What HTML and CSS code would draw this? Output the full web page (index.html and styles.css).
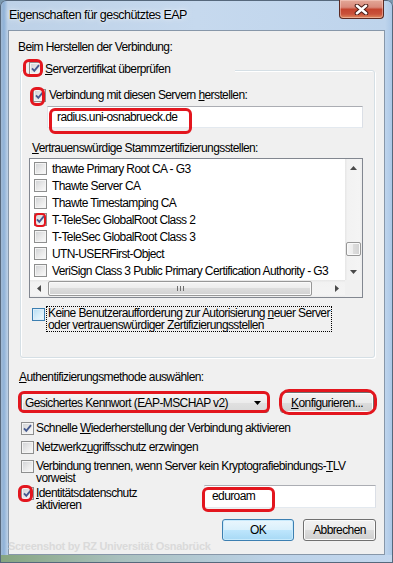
FILE: index.html
```html
<!DOCTYPE html>
<html lang="de">
<head>
    <meta charset="UTF-8">
    <meta name="viewport" content="width=device-width, initial-scale=1.0">
    <title>Eigenschaften für geschütztes EAP</title>
    <link rel="stylesheet" href="styles.css">
</head>
<body>
    <div class="window">
        <div class="titlebar">
            <span class="title">Eigenschaften für geschütztes EAP</span>
            <div class="close-btn">
                <svg width="15" height="11" viewBox="0 0 15 11">
                    <path d="M3 1.8L12 9.2M12 1.8L3 9.2" stroke="#4a1d16" stroke-width="4.6" stroke-linecap="round"/>
                    <path d="M3 1.8L12 9.2M12 1.8L3 9.2" stroke="#fff" stroke-width="2.6" stroke-linecap="round"/>
                </svg>
            </div>
        </div>

        <div class="client">
            <div class="intro">Beim Herstellen der Verbindung:</div>

            <div class="group">
                <div class="group-caption">
                    <span class="box hl hl-server"><svg class="tick" width="11" height="11" viewBox="0 0 11 11"><path d="M2 5.3L4.3 7.8L9 2.2"/></svg></span>
                    <span><u>S</u>erverzertifikat überprüfen</span>
                </div>

                <div class="check servers-check">
                    <span class="box hl hl-servers"><svg class="tick" width="11" height="11" viewBox="0 0 11 11"><path d="M2 5.3L4.3 7.8L9 2.2"/></svg></span>
                    <span>Verbindung mit diesen Servern <u>h</u>erstellen:</span>
                </div>

                <div class="textbox servers-field hl hl-radius">radius.uni-osnabrueck.de</div>

                <div class="list-label"><u>V</u>ertrauenswürdige Stammzertifizierungsstellen:</div>

                <div class="listbox">
                    <div class="items">
                        <div class="item"><span class="box"></span>thawte Primary Root CA - G3</div>
                        <div class="item"><span class="box"></span>Thawte Server CA</div>
                        <div class="item"><span class="box"></span>Thawte Timestamping CA</div>
                        <div class="item"><span class="box hl hl-telesec"><svg class="tick" width="11" height="11" viewBox="0 0 11 11"><path d="M2 5.3L4.3 7.8L9 2.2"/></svg></span>T-TeleSec GlobalRoot Class 2</div>
                        <div class="item"><span class="box"></span>T-TeleSec GlobalRoot Class 3</div>
                        <div class="item"><span class="box"></span>UTN-USERFirst-Object</div>
                        <div class="item"><span class="box"></span>VeriSign Class 3 Public Primary Certification Authority - G3</div>
                    </div>
                    <div class="vscroll">
                        <div class="arrow-btn"><svg width="7" height="4" viewBox="0 0 7 4"><path d="M3.5 0L7 4H0Z"/></svg></div>
                        <div class="track">
                            <div class="vthumb"></div>
                        </div>
                        <div class="arrow-btn"><svg width="7" height="4" viewBox="0 0 7 4"><path d="M0 0H7L3.5 4Z"/></svg></div>
                    </div>
                    <div class="hscroll">
                        <div class="arrow-btn"><svg width="4" height="7" viewBox="0 0 4 7"><path d="M0 3.5L4 0V7Z"/></svg></div>
                        <div class="htrack">
                            <div class="hthumb"><span class="grip"></span></div>
                        </div>
                        <div class="arrow-btn"><svg width="4" height="7" viewBox="0 0 4 7"><path d="M0 0L4 3.5L0 7Z"/></svg></div>
                    </div>
                    <div class="corner"></div>
                </div>

                <div class="prompt-row">
                    <span class="box hot"></span>
                    <span class="focus">Keine Benutzeraufforderung zur Autorisierung <u>n</u>euer Server<br>oder vertrauenswürdiger Zertifizierungsstellen</span>
                </div>
            </div>

            <div class="auth-label"><u>A</u>uthentifizierungsmethode auswählen:</div>

            <div class="method-row">
                <div class="combo hl hl-combo">
                    <span>Gesichertes Kennwort (EAP-MSCHAP v2)</span>
                    <svg width="7" height="4" viewBox="0 0 7 4"><path d="M0 0H7L3.5 4Z"/></svg>
                </div>
                <div class="button config-btn hl hl-config"><u>K</u>onfigurieren...</div>
            </div>

            <div class="check opt opt-fast">
                <span class="box"><svg class="tick" width="11" height="11" viewBox="0 0 11 11"><path d="M2 5.3L4.3 7.8L9 2.2"/></svg></span>
                <span>Schnelle <u>W</u>iederherstellung der Verbindung aktivieren</span>
            </div>
            <div class="check opt opt-nap">
                <span class="box"></span>
                <span>Netzwerkz<u>u</u>griffsschutz erzwingen</span>
            </div>
            <div class="check opt opt-tlv multi">
                <span class="box"></span>
                <span>Verbindung trennen, wenn Server kein Kryptografiebindungs-<u>T</u>LV<br>vorweist</span>
            </div>
            <div class="identity-row">
                <div class="check opt multi">
                    <span class="box hl hl-identity"><svg class="tick" width="11" height="11" viewBox="0 0 11 11"><path d="M2 5.3L4.3 7.8L9 2.2"/></svg></span>
                    <span><u>I</u>dentitätsdatenschutz<br>aktivieren</span>
                </div>
                <div class="textbox identity-field hl hl-eduroam">eduroam</div>
            </div>

            <div class="dialog-buttons">
                <div class="button default-btn">OK</div>
                <div class="button cancel-btn">Abbrechen</div>
            </div>

            <div class="watermark">Screenshot by RZ Universität Osnabrück</div>
        </div>
    </div>
</body>
</html>
```

FILE: styles.css
```css
* {
    box-sizing: border-box;
}

body {
    margin: 0;
    background-color: #7a98ae;
    font-family: "Liberation Sans", Arial, sans-serif;
    font-size: 12px;
    letter-spacing: -0.6px;
    color: #000;
}

u {
    text-decoration: underline;
    text-underline-offset: 1px;
}

/* Fensterrahmen */
.window {
    width: 393px;
    height: 563px;
    display: flex;
    flex-direction: column;
    padding: 0 8px 8px 8px;
    border-radius: 6px 6px 0 0;
    background:
        linear-gradient(90deg, #86a57f 0%, #a9c0bd 30%, #bcd2e8 70%, #c3d7ee 100%) bottom / 100% 8px no-repeat,
        linear-gradient(90deg, #a8bdd4 0%, #8fb2d8 1%, #bdd1e7 2%, #c6d9ee 50%, #bed4ec 98%, #a9c6e6 100%);
    box-shadow: inset 0 0 0 1px #56687c;
}

.titlebar {
    height: 30px;
    display: flex;
    align-items: flex-start;
    justify-content: space-between;
}

.title {
    margin: 7px 0 0 1px;
    font-size: 12.5px;
    letter-spacing: -0.55px;
    line-height: 16px;
    text-shadow: 0 0 6px rgba(255, 255, 255, 0.9), 0 0 2px rgba(255, 255, 255, 0.8);
}

.close-btn {
    width: 45px;
    height: 19px;
    margin-right: 1px;
    border: 1px solid #5b2a22;
    border-top: none;
    border-radius: 0 0 4px 4px;
    background: linear-gradient(#e3a898 0%, #d98a7b 40%, #c4452f 52%, #c9513a 78%, #de8a5e 100%);
    box-shadow: inset 0 0 0 1px rgba(255, 220, 210, 0.45);
    display: flex;
    align-items: center;
    justify-content: center;
}

.close-btn svg {
    fill: none;
}

/* Client-Bereich */
.client {
    flex: 1;
    background-color: #f0f0f0;
    border: 1px solid #8797a9;
    display: flex;
    flex-direction: column;
    align-items: flex-start;
}

.intro {
    margin: 9px 0 0 9px;
    line-height: 15px;
}

.group {
    align-self: stretch;
    margin: 15px 9px 0 11px;
    padding-bottom: 25px;
    border: 1px solid #d5dfe5;
    border-radius: 3px;
    box-shadow: inset 1px 1px 0 #fff, 1px 1px 0 #fff;
}

.group-caption {
    width: 211px;
    height: 15px;
    margin: -10px 0 0 3px;
    padding-left: 5px;
    background-color: #f0f0f0;
    display: flex;
    align-items: center;
    gap: 3px;
}

/* Checkboxen */
.box {
    width: 13px;
    height: 13px;
    flex: none;
    border: 1px solid #8e8f8f;
    background: linear-gradient(135deg, #cfd1d4 0%, #eaeaea 55%, #fbfbfb 100%);
    box-shadow: inset 0 0 0 1px #f4f4f4;
}

.box.hot {
    border-color: #3c7fb1;
    background: linear-gradient(135deg, #b6ddf3 0%, #d9effa 55%, #ecf7fd 100%);
    box-shadow: inset 0 0 0 1px #deeefa;
}

.tick {
    display: block;
}

.tick path {
    fill: none;
    stroke: #465a8f;
    stroke-width: 1.9;
}

.check {
    display: flex;
    align-items: center;
    gap: 3px;
    line-height: 15px;
}

.servers-check {
    margin: 12px 0 0 12px;
}

.textbox {
    height: 22px;
    background-color: #fff;
    border: 1px solid;
    border-color: #abadb3 #dbdfe6 #e3e9ef #e2e3ea;
    line-height: 20px;
}

.servers-field {
    margin: 3px 11px 0 26px;
    padding-left: 9px;
}

.list-label {
    margin: 13px 0 0 11px;
    line-height: 15px;
}

/* Liste mit Zertifikaten */
.listbox {
    height: 140px;
    margin: 2px 11px 0 8px;
    border: 1px solid #828790;
    background-color: #fff;
    display: grid;
    grid-template-columns: 1fr 17px;
    grid-template-rows: 1fr 17px;
}

.items {
    padding-top: 1px;
    overflow: hidden;
}

.item {
    height: 17px;
    display: flex;
    align-items: center;
    gap: 5px;
    padding-left: 4px;
    white-space: nowrap;
}

.vscroll {
    display: flex;
    flex-direction: column;
    background: linear-gradient(90deg, #e6e6e6 0%, #f2f2f2 15%, #f4f4f4 85%, #ececec 100%);
}

.arrow-btn {
    width: 17px;
    height: 17px;
    flex: none;
    display: flex;
    align-items: center;
    justify-content: center;
}

.arrow-btn svg {
    fill: #4a4a4a;
}

.track {
    flex: 1;
}

.vthumb {
    width: 15px;
    height: 14px;
    margin: 66px 0 0 1px;
    border: 1px solid #979797;
    border-radius: 2px;
    background: linear-gradient(90deg, #f4f4f4 0%, #ececec 50%, #dcdcdc 50%, #d2d2d2 100%);
    box-shadow: inset 0 0 0 1px #fafafa;
}

.hscroll {
    display: flex;
    background: linear-gradient(#e6e6e6 0%, #f2f2f2 15%, #f4f4f4 85%, #ececec 100%);
}

.htrack {
    flex: 1;
    display: flex;
}

.hthumb {
    width: 264px;
    height: 15px;
    margin: 1px 0 0 1px;
    border: 1px solid #979797;
    border-radius: 2px;
    background: linear-gradient(#f4f4f4 0%, #ececec 50%, #dcdcdc 50%, #d2d2d2 100%);
    box-shadow: inset 0 0 0 1px #fafafa;
    display: flex;
    align-items: center;
    justify-content: center;
}

.grip {
    width: 7px;
    height: 5px;
    background: repeating-linear-gradient(90deg, #6e6e6e 0 1px, transparent 1px 3px);
}

.corner {
    background-color: #f0f0f0;
}

.prompt-row {
    display: flex;
    align-items: flex-start;
    gap: 1px;
    margin: 8px 0 0 11px;
}

.prompt-row .box {
    margin-top: 2px;
}

.focus {
    border: 1px dotted #000;
    padding: 0 1px;
    line-height: 12px;
}

/* Authentifizierung */
.auth-label {
    margin: 12px 0 0 10px;
    line-height: 15px;
}

.method-row {
    display: flex;
    gap: 11px;
    margin: 7px 0 0 12px;
}

.combo {
    width: 248px;
    height: 21px;
    padding: 0 7px 0 3px;
    border: 1px solid #707070;
    border-radius: 3px;
    background: linear-gradient(#f6f6f6 0%, #ececec 50%, #e1e1e1 50%, #d9d9d9 100%);
    box-shadow: inset 0 0 0 1px #fcfcfc;
    display: flex;
    align-items: center;
    justify-content: space-between;
}

.combo svg {
    fill: #000;
}

.button {
    height: 21px;
    border: 1px solid #707070;
    border-radius: 3px;
    background: linear-gradient(#f2f2f2 0%, #ebebeb 50%, #dddddd 50%, #cfcfcf 100%);
    box-shadow: inset 0 0 0 1px #fcfcfc;
    display: flex;
    align-items: center;
    justify-content: center;
}

.config-btn {
    width: 94px;
}

.opt {
    padding-left: 12px;
    gap: 2px;
}

.opt-fast {
    margin-top: 8px;
}

.opt-nap {
    margin-top: 4px;
}

.opt-tlv {
    margin-top: 5px;
}

.multi {
    align-items: flex-start;
    line-height: 12px;
}

.identity-row {
    align-self: stretch;
    display: flex;
    justify-content: space-between;
    align-items: flex-start;
    margin-top: 3px;
}

.identity-field {
    width: 172px;
    height: 23px;
    margin: -2px 8px 0 0;
    padding-left: 7px;
}

.dialog-buttons {
    align-self: stretch;
    display: flex;
    justify-content: flex-end;
    gap: 9px;
    margin: 8px 8px 0 0;
}

.dialog-buttons .button {
    height: 22px;
}

.default-btn {
    width: 72px;
    border-color: #3c7fb1;
    background: linear-gradient(#eaf6fd 0%, #d9f0fc 50%, #bee6fd 50%, #a7d9f5 100%);
    box-shadow: inset 0 0 0 1px #c8eafc;
}

.cancel-btn {
    width: 73px;
}

.watermark {
    margin: -1px 0 0 -1px;
    font-size: 11px;
    font-weight: bold;
    letter-spacing: -0.3px;
    line-height: 13px;
    color: #dadada;
}

/* rote Markierungen (Anleitung) */
.hl {
    position: relative;
}

.hl::after {
    content: "";
    position: absolute;
    border: 3px solid #e3161e;
    border-radius: 6px;
}

.hl-server::after {
    inset: -4px -2px -3px -7px;
}

.hl-servers::after {
    inset: -3px 0 -5px -4px;
}

.hl-radius::after {
    left: 1px;
    top: 1px;
    width: 137px;
    height: 20px;
}

.hl-telesec::after {
    inset: -1px 0 -2px -1px;
    border-width: 2px;
    border-radius: 4px;
}

.hl-combo::after {
    inset: -2px -2px -1px -4px;
}

.hl-config::after {
    inset: -4px -4px -3px -2px;
    border-radius: 10px;
}

.hl-identity::after {
    inset: -3px 0 -3px -4px;
}

.hl-eduroam::after {
    left: -3px;
    top: 1px;
    width: 67px;
    height: 19px;
}
```
